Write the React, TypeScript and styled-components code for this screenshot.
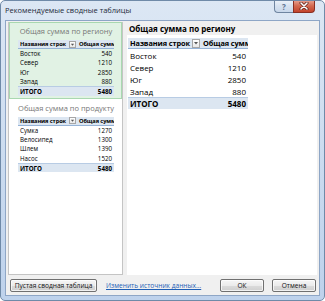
import React from 'react';
import styled, { createGlobalStyle, css } from 'styled-components';

const GlobalStyle = createGlobalStyle`
  html, body {
    margin: 0;
    padding: 0;
    background: #ffffff;
  }
  body {
    font-family: "Open Sans", "Noto Sans", sans-serif;
    color: #000;
  }
  * { box-sizing: border-box; }
`;

type Row = { label: string; value: number };

type PivotProps = {
  title: string;
  rows: Row[];
  total: number;
};

const regionRows: Row[] = [
  { label: 'Восток', value: 540 },
  { label: 'Север', value: 1210 },
  { label: 'Юг', value: 2850 },
  { label: 'Запад', value: 880 },
];

const productRows: Row[] = [
  { label: 'Сумка', value: 1270 },
  { label: 'Велосипед', value: 1300 },
  { label: 'Шлем', value: 1390 },
  { label: 'Насос', value: 1520 },
];

const Window = styled.div`
  width: 325px;
  height: 301px;
  display: flex;
  flex-direction: column;
  border: 1px solid #6f8aa8;
  border-radius: 5px;
  background: linear-gradient(#dce7f4, #c9daef 60%, #bed2ec);
  overflow: hidden;
`;

const TitleBar = styled.div`
  height: 19px;
  flex-shrink: 0;
  display: flex;
  align-items: flex-start;
  padding-left: 4px;
`;

const Caption = styled.div`
  flex: 1;
  font-size: 7.5px;
  line-height: 19px;
  color: #1e2b3a;
  white-space: nowrap;
`;

const Controls = styled.div`
  display: flex;
  margin-right: 9px;
  margin-top: -1px;
`;

const CaptionButton = styled.div<{ $danger?: boolean }>`
  height: 13px;
  display: flex;
  align-items: center;
  justify-content: center;
  border: 1px solid #6f85a0;
  border-top: none;
  font-size: 8px;
  font-weight: 700;
  ${({ $danger }) =>
    $danger
      ? css`
          width: 22px;
          border-color: #8a2f22;
          border-radius: 0 0 4px 0;
          background: linear-gradient(#e9a797, #d2684f 50%, #c3432b);
        `
      : css`
          width: 19px;
          border-right: none;
          border-radius: 0 0 0 4px;
          color: #5d7390;
          background: linear-gradient(#eef3f9, #d6e2f0 50%, #c8d7ea);
        `}
`;

const Client = styled.div`
  flex: 1;
  margin: 0 4px 4px 4px;
  border: 1px solid #8ea6c6;
  background: #f0f0f0;
  padding: 1px 2px 0 2px;
  display: flex;
  flex-direction: column;
`;

const Body = styled.div`
  height: 253px;
  display: flex;
  gap: 4px;
`;

const List = styled.div`
  width: 115px;
  background: #fff;
  border: 1px solid #c4c4c4;
  border-top: none;
  display: flex;
  flex-direction: column;
`;

const Item = styled.div<{ $selected?: boolean }>`
  padding: 3px 7px 2px 8px;
  border: 1px solid ${({ $selected }) => ($selected ? '#a9d8b0' : 'transparent')};
  background: ${({ $selected }) => ($selected ? '#e1f2e4' : 'transparent')};
`;

const ItemTitle = styled.div`
  height: 10px;
  margin-bottom: 4px;
  font-size: 7.5px;
  line-height: 10px;
  color: #777;
  text-align: center;
  white-space: nowrap;
`;

const Preview = styled.div`
  flex: 1;
  display: flex;
  flex-direction: column;
`;

const PreviewTitle = styled.div`
  height: 13px;
  padding-left: 2px;
  font-size: 8px;
  font-weight: 700;
  line-height: 13px;
  white-space: nowrap;
`;

const PreviewSheet = styled.div`
  flex: 1;
  background: #fff;
  padding: 3px 0 0 1px;
`;

const Table = styled.div<{ $big?: boolean }>`
  display: grid;
  grid-template-columns: ${({ $big }) => ($big ? '73px 47px' : '59px 37px')};
  font-size: ${({ $big }) => ($big ? '8px' : '6.2px')};
  width: ${({ $big }) => ($big ? '120px' : '96px')};
`;

const Cell = styled.div<{ $big?: boolean; $num?: boolean; $kind?: 'head' | 'total' }>`
  height: ${({ $big }) => ($big ? '12px' : '9.3px')};
  display: flex;
  align-items: center;
  justify-content: ${({ $num }) => ($num ? 'flex-end' : 'flex-start')};
  padding: 0 ${({ $num }) => ($num ? '2px' : '0')} 0 ${({ $num }) => ($num ? '0' : '2px')};
  white-space: nowrap;
  overflow: hidden;
  color: #000;
  ${({ $kind, $big }) =>
    $kind === 'head' &&
    css`
      height: ${$big ? '11px' : '9px'};
      font-size: 0.92em;
      letter-spacing: -0.1px;
      font-weight: 700;
      background: #dce6f1;
      border-bottom: 1px solid #95b3d7;
      justify-content: flex-start;
      padding: 0 0 0 2px;
    `}
  ${({ $kind, $big }) =>
    $kind === 'total' &&
    css`
      height: ${$big ? '11.5px' : '9.5px'};
      font-weight: 700;
      background: #dce6f1;
      border-top: 1px solid #b8cce4;
    `}
`;

const HeadLabel = styled.span`
  flex: 1;
  overflow: hidden;
`;

const FilterButton = styled.span<{ $big?: boolean }>`
  flex-shrink: 0;
  width: ${({ $big }) => ($big ? '8px' : '7px')};
  height: ${({ $big }) => ($big ? '9px' : '7px')};
  margin-right: 1px;
  border: 1px solid #a6a6a6;
  background: linear-gradient(#ffffff, #e8e8e8);
  display: flex;
  align-items: center;
  justify-content: center;
`;

const Footer = styled.div`
  flex: 1;
  display: flex;
  align-items: flex-start;
  padding: 4px 1px 0 2px;
`;

const Button = styled.button<{ $wide?: boolean }>`
  height: 13px;
  width: ${({ $wide }) => ($wide ? '87px' : '44px')};
  padding: 0;
  border: 1px solid #707070;
  border-radius: 2px;
  background: linear-gradient(#f6f6f6, #ebebeb 50%, #dbdbdb 51%, #cfcfcf);
  font-family: "Open Sans", "Noto Sans", sans-serif;
  font-size: 6.6px;
  line-height: 11px;
  color: #111;
  white-space: nowrap;
  box-shadow: inset 0 0 0 1px rgba(255, 255, 255, 0.7);
`;

const Link = styled.a`
  margin-left: 9px;
  margin-right: auto;
  font-size: 6.6px;
  line-height: 13px;
  color: #1f5fb6;
  text-decoration: underline;
  white-space: nowrap;
`;

const ButtonGap = styled.div`
  width: 8px;
`;

const Triangle = ({ size }: { size: number }) => (
  <svg width={size} height={size} viewBox="0 0 6 6">
    <path d="M1 2 L5 2 L3 4.5 Z" fill="#555" />
  </svg>
);

const CloseGlyph = () => (
  <svg width="10" height="8" viewBox="0 0 10 8">
    <path d="M2 1 L8 7 M8 1 L2 7" stroke="#5a1c12" strokeWidth="3" strokeLinecap="round" />
    <path d="M2 1 L8 7 M8 1 L2 7" stroke="#fff" strokeWidth="1.6" strokeLinecap="round" />
  </svg>
);

const PivotTable: React.FC<PivotProps & { big?: boolean }> = ({ rows, total, big }) => (
  <Table $big={big}>
    <Cell $big={big} $kind="head">
      <HeadLabel>Названия строк</HeadLabel>
      <FilterButton $big={big}>
        <Triangle size={big ? 6 : 5} />
      </FilterButton>
    </Cell>
    <Cell $big={big} $kind="head">Общая сумма</Cell>
    {rows.map((r) => (
      <React.Fragment key={r.label}>
        <Cell $big={big}>{r.label}</Cell>
        <Cell $big={big} $num>{r.value}</Cell>
      </React.Fragment>
    ))}
    <Cell $big={big} $kind="total">ИТОГО</Cell>
    <Cell $big={big} $kind="total" $num>{total}</Cell>
  </Table>
);

const Suggestion: React.FC<PivotProps & { selected?: boolean }> = ({ title, rows, total, selected }) => (
  <Item $selected={selected}>
    <ItemTitle>{title}</ItemTitle>
    <PivotTable title={title} rows={rows} total={total} />
  </Item>
);

export default function App() {
  return (
    <>
      <GlobalStyle />
      <Window>
        <TitleBar>
          <Caption>Рекомендуемые сводные таблицы</Caption>
          <Controls>
            <CaptionButton>?</CaptionButton>
            <CaptionButton $danger>
              <CloseGlyph />
            </CaptionButton>
          </Controls>
        </TitleBar>
        <Client>
          <Body>
            <List>
              <Suggestion title="Общая сумма по региону" rows={regionRows} total={5480} selected />
              <Suggestion title="Общая сумма по продукту" rows={productRows} total={5480} />
            </List>
            <Preview>
              <PreviewTitle>Общая сумма по региону</PreviewTitle>
              <PreviewSheet>
                <PivotTable title="Общая сумма по региону" rows={regionRows} total={5480} big />
              </PreviewSheet>
            </Preview>
          </Body>
          <Footer>
            <Button $wide>Пустая сводная таблица</Button>
            <Link href="#">Изменить источник данных...</Link>
            <Button>ОК</Button>
            <ButtonGap />
            <Button>Отмена</Button>
          </Footer>
        </Client>
      </Window>
    </>
  );
}
